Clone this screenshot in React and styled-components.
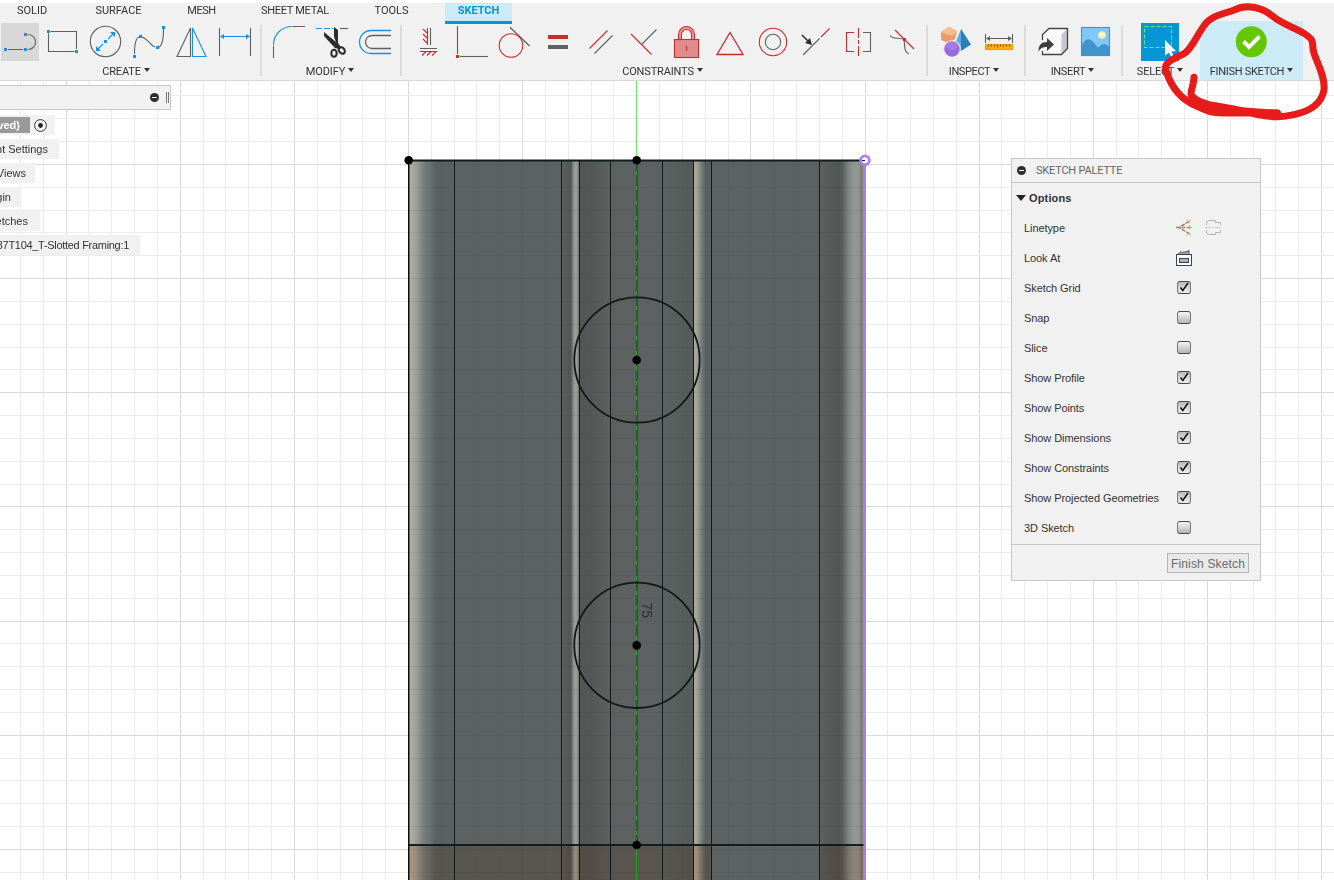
import React from "react";
import styled, { createGlobalStyle, css } from "styled-components";

const Global = createGlobalStyle`
  * { box-sizing: border-box; }
  body { margin: 0; background: #fff; overflow: hidden; }
`;

const ink = "#606060";
const red = "#cf2a2a";
const blue = "#1a8fe3";
const ui = `Roboto, "Liberation Sans", sans-serif`;
const body = `"Liberation Sans", Arial, sans-serif`;

const Page = styled.div`
  position: relative;
  display: flex;
  flex-direction: column;
  width: 1334px;
  height: 880px;
  overflow: hidden;
  color: #333;
  font: 11px ${body};
`;
const Header = styled.header`
  height: 81px;
  flex: none;
  border-top: 3px solid #fff;
  border-bottom: 1px solid #d8d8d8;
  background: #f1f1f1;
  font-family: ${ui};
`;
const Tabs = styled.nav`
  display: flex;
  height: 20px;
`;
const Tab = styled.div`
  width: ${(p) => p.$w}px;
  height: 21px;
  margin-left: ${(p) => p.$gap || 0}px;
  padding-top: 1px;
  line-height: 13px;
  text-align: center;
  letter-spacing: ${(p) => p.$ls || 0}px;
  ${(p) =>
    p.$active &&
    css`
      color: #0696d7;
      font-weight: 700;
      background: #cdeaf7;
      border-bottom: 3px solid #0696d7;
    `}
`;
const Toolbar = styled.div`
  display: flex;
  height: 57px;
  padding-left: 1px;
`;
const Group = styled.section`
  display: flex;
  flex-direction: column;
  align-items: center;
`;
const SelectGroup = styled(Group)`
  width: 38px;
`;
const FinishGroup = styled(Group)`
  width: 103px;
  height: 59px;
  margin: -2px 0 0 21px;
  padding-top: 2px;
  background: #cdeaf7;
`;
const IconRow = styled.div`
  display: flex;
  gap: 5px;
  height: 38px;
`;
const IconSvg = styled.svg`
  display: block;
  flex: none;
  fill: none;
  stroke: ${ink};
  stroke-width: 1.1;
  background: ${(p) => p.$bg || "none"};
`;
const Divider = styled.div`
  width: ${(p) => p.$w}px;
  flex: none;
  padding: 2px 0 4px 6px;
  &::before {
    content: "";
    display: block;
    width: 2px;
    height: 51px;
    background: #dcdcdc;
  }
`;
const Label = styled.div`
  display: flex;
  align-items: center;
  gap: 3px;
  height: 14px;
  margin: 3px 0 0 ${(p) => p.$shift || 0}px;
  white-space: nowrap;
  letter-spacing: ${(p) => p.$ls || 0}px;
  &::after {
    content: "";
    margin-top: -2px;
    border: 3px solid transparent;
    border-top: 4px solid #333;
    border-bottom: 0;
  }
`;
const Viewport = styled.main`
  position: relative;
  flex: 1;
`;
const Scene = styled.svg`
  position: absolute;
  inset: 0;
`;
const Browser = styled.aside`
  position: absolute;
  left: 0;
  top: 4px;
  display: flex;
  flex-direction: column;
  align-items: flex-start;
  gap: 4px;
`;
const BrowserBar = styled.div`
  display: flex;
  align-items: center;
  justify-content: flex-end;
  gap: 7px;
  width: 171px;
  height: 25px;
  margin-bottom: 1px;
  padding-right: 1px;
  border: 1px solid #c8c8c8;
  border-left: 0;
  background: #f1f1f1;
`;
const Minus = styled.i`
  display: flex;
  align-items: center;
  justify-content: center;
  width: 9px;
  height: 9px;
  border-radius: 50%;
  background: #2d2d2d;
  &::before {
    content: "";
    width: 5px;
    height: 1px;
    background: #fff;
  }
`;
const Grip = styled.i`
  width: 3px;
  height: 11px;
  border: solid #777;
  border-width: 0 1px;
`;
const Node = styled.div`
  display: flex;
  align-items: center;
  justify-content: flex-end;
  width: ${(p) => p.$w}px;
  height: 20px;
  padding-right: ${(p) => p.$pad ?? 11}px;
  letter-spacing: ${(p) => p.$ls || 0}px;
  overflow: hidden;
  white-space: nowrap;
  background: #f1f1f1;
`;
const RootName = styled.b`
  display: flex;
  align-items: center;
  justify-content: flex-end;
  width: 30px;
  height: 16px;
  padding-right: 10px;
  margin-right: 4px;
  color: #fff;
  background: #999;
`;
const Palette = styled.aside`
  position: absolute;
  left: 1011px;
  top: 77px;
  width: 250px;
  height: 423px;
  border: 1px solid #c8c8c8;
  background: #f1f1f1;
`;
const PaletteHead = styled.div`
  display: flex;
  align-items: center;
  gap: 10px;
  height: 24px;
  padding-left: 5px;
  border-bottom: 1px solid #c8c8c8;
  color: #666;
  font-family: ${ui};
  letter-spacing: -0.2px;
`;
const Section = styled.div`
  display: flex;
  align-items: center;
  gap: 4px;
  height: 30px;
  padding-left: 4px;
  font-weight: 700;
  letter-spacing: 0.15px;
  &::before {
    content: "";
    margin-right: -1px;
    border: 5px solid transparent;
    border-top: 6px solid #222;
    border-bottom: 0;
  }
`;
const Option = styled.div`
  display: flex;
  align-items: center;
  height: 30px;
  padding-left: 12px;
`;
const OptionName = styled.span`
  width: 153px;
  white-space: nowrap;
  letter-spacing: -0.08px;
`;
const Tools = styled.span`
  display: flex;
  gap: 12px;
  margin: -1px 0 0 -1px;
`;
const Check = styled.span`
  display: flex;
  width: 14px;
  height: 13px;
  margin-top: -1px;
  border: 1px solid #484848;
  border-color: #484848 #777;
  border-radius: 3px;
  background: linear-gradient(${(p) => (p.$on ? "#bababa, #eee" : "#f4f4f4, #b4b4b4")});
  svg { display: block; }
`;
const Footer = styled.div`
  display: flex;
  justify-content: flex-end;
  height: 37px;
  margin-top: 1px;
  padding: 8px 11px;
  border-top: 1px solid #c8c8c8;
`;
const FinishButton = styled.button`
  width: 82px;
  height: 20px;
  padding: 1px 0 0;
  border: 1px solid #b4b4b4;
  background: #e9e9e9;
  color: #6b6b6b;
  font: 12px ${body};
  letter-spacing: 0.15px;
  white-space: nowrap;
`;
const Markup = styled.svg`
  position: absolute;
  left: 0;
  top: 0;
  pointer-events: none;
`;
const Tint = styled.path`
  mix-blend-mode: multiply;
`;

/* Icon artwork shares one coordinate space; each icon is a 38px window on it. */
const Icon = ({ x, bg, children }) => (
  <IconSvg width="38" height="38" viewBox={`${x} 23 38 38`} $bg={bg}>
    {children}
  </IconSvg>
);
const Dots = ({ at, color = blue }) =>
  at.map(([x, y]) => (
    <rect key={`${x},${y}`} x={x - 1.5} y={y - 1.5} width="3" height="3" fill={color} stroke="none" />
  ));

const createIcons = (
  <IconRow>
    <Icon x={1} bg="#d8d8d8">
      <path d="M8 49.5H23M28 34.5C38 34.5 38 49.5 28 49.5" />
      <Dots at={[[5.5, 49.5], [25.5, 34.5], [25.5, 49.5]]} />
    </Icon>
    <Icon x={44}>
      <path d="M50.5 31.5H76.5V49M74.5 51.5H48.5V33.5" />
      <Dots at={[[48.5, 31.5], [76.5, 51.5]]} />
    </Icon>
    <Icon x={87}>
      <circle cx="105.5" cy="41.5" r="15.2" />
      <path d="M98 49L103 44M108 39L113 34" stroke={blue} />
      <path d="M96 51V46L101 51ZM115 32V37L110 32Z" fill={blue} stroke="none" />
      <Dots at={[[105.5, 41.5]]} />
    </Icon>
    <Icon x={130}>
      <path d="M134.5 54C134.5 46 136 38 139 37M142 37C148 39 151 46 155 47M159 47C163 45 163.5 36 163.5 29" />
      <Dots at={[[134.5, 56.5], [140.5, 36.5], [157.5, 47.5], [163.5, 27.5]]} />
    </Icon>
    <Icon x={173}>
      <path d="M190.5 28V56.5H177Z" />
      <path d="M192.5 28V56.5H206Z" stroke={blue} />
    </Icon>
    <Icon x={216}>
      <path d="M219.5 28V56M250.5 28V56" />
      <path d="M222 36.5H248" stroke={blue} />
      <path d="M220 36.5l4-2.5v5zM250 36.5l-4-2.5v5z" fill={blue} stroke="none" />
    </Icon>
  </IconRow>
);

const modifyIcons = (
  <IconRow>
    <Icon x={270}>
      <path d="M273.5 46V58M293 26.5H305" />
      <path d="M273.5 45C273.5 35 281 26.5 292 26.5" stroke={blue} />
    </Icon>
    <Icon x={313}>
      <path d="M316 28.5H333" stroke={blue} strokeDasharray="6 2" />
      <path d="M340 28.5H348" />
      <path d="M324 32L336 42L334 37V27L338 30V43L341 47L339 49L335 48L324 36Z" fill="#2d2d2d" stroke="none" />
      <ellipse cx="334" cy="53.3" rx="2.7" ry="3.5" stroke="#2d2d2d" strokeWidth="2.1" />
      <ellipse cx="341.8" cy="50.5" rx="2.7" ry="3.5" transform="rotate(-42 341.8 50.5)" stroke="#2d2d2d" strokeWidth="2.1" />
    </Icon>
    <Icon x={356}>
      <path d="M391 30.5H371A11.5 11.5 0 0 0 371 53.5H391" stroke={blue} strokeWidth="1.3" />
      <path d="M391 35.5H372A6.5 6.5 0 0 0 372 48.5H391" strokeWidth="1.3" />
    </Icon>
  </IconRow>
);

const constraintIcons = (
  <IconRow>
    <Icon x={409}>
      <path d="M430.5 28V45M420 48.5H437" />
      <path d="M427.5 28V45M420 51.5H437M423 29l4 4M423 34l4 4M423 39l4 4M422 55.5l4-4M427 55.5l4-4M432 55.5l4-4" stroke={red} />
    </Icon>
    <Icon x={452}>
      <path d="M460 56.5H488" />
      <path d="M457.5 26V54" stroke={red} />
      <Dots at={[[457.5, 56.5]]} color={red} />
    </Icon>
    <Icon x={495}>
      <path d="M510 27.3L529.5 46" strokeWidth="1.3" />
      <circle cx="511" cy="45.5" r="11.8" stroke={red} />
    </Icon>
    <Icon x={538}>
      <rect x="548" y="35" width="20" height="4" fill={red} stroke="none" />
      <rect x="548" y="45" width="20" height="4" fill={ink} stroke="none" />
    </Icon>
    <Icon x={581}>
      <path d="M594.5 53.5L612.5 35.5" />
      <path d="M589.5 48.5L607.5 30.5" stroke={red} />
    </Icon>
    <Icon x={624}>
      <path d="M642 44L656.5 29.5" />
      <path d="M631 34L651.5 54.5" stroke={red} />
    </Icon>
    <Icon x={667}>
      <path d="M680 39V34.5A6.5 6.5 0 0 1 693 34.5V39" stroke={red} strokeWidth="4" />
      <path d="M680 39V34.5A6.5 6.5 0 0 1 693 34.5V39" stroke="#e49a9a" strokeWidth="2" />
      <rect x="674.5" y="39.5" width="24" height="18" fill="#e08c8c" stroke={red} />
      <path d="M686.5 45.5V51" stroke={red} />
    </Icon>
    <Icon x={710}>
      <path d="M730 32.5L743 54.5H717Z" stroke={red} strokeWidth="1.3" />
    </Icon>
    <Icon x={753}>
      <circle cx="773" cy="42" r="13.7" stroke={red} />
      <circle cx="773" cy="42" r="7.7" />
    </Icon>
    <Icon x={796}>
      <path d="M803 55L819.5 38.5" />
      <path d="M821 37L829.5 28.5" stroke={red} />
      <path d="M802 35L808 41" stroke="#2d2d2d" strokeWidth="1.5" />
      <path d="M812 45L805 43L810 38Z" fill="#2d2d2d" stroke="none" />
    </Icon>
    <Icon x={839}>
      <path d="M863 32.5H870.5V51.5H863" />
      <path d="M854 32.5H846.5V51.5H854M858.5 28V38M858.5 40V44M858.5 46V56" stroke={red} />
    </Icon>
    <Icon x={882}>
      <path d="M890 35.5C893 40 899 37 904 39.5C905 46 904 53 909 53.5" />
      <path d="M895 30L914 49" stroke={red} />
      <Dots at={[[904.5, 39.5]]} color={red} />
    </Icon>
  </IconRow>
);

const inspectIcons = (
  <IconRow>
    <Icon x={937}>
      <path d="M949 27L957 31L955 39L948 43L941 40V32Z" fill="#eb9d67" stroke="none" />
      <path d="M949 27L957 31L952 36L941 32Z" fill="#f6bd91" stroke="none" />
      <path d="M961 29L954 46L961 51Z" fill="#5aaee0" stroke="none" />
      <path d="M961 29L971 44.5L961 51Z" fill="#2d7fb8" stroke="none" />
      <circle cx="952" cy="49" r="8.3" fill="#9a6bdc" stroke="#f1f1f1" />
      <ellipse cx="952" cy="46" rx="6" ry="4" fill="#a87ae6" stroke="none" />
    </Icon>
    <Icon x={980}>
      <path d="M985.5 34V43M1012.5 34V43M988 38.5H1010" />
      <path d="M986 38.5l4-2.5v5zM1012 38.5l-4-2.5v5z" fill={ink} stroke="none" />
      <rect x="985.5" y="44.5" width="27" height="5" fill="#ffab0a" stroke="#f29f08" />
      <path d="M988.5 44.5v2M991.5 44.5v2M994.5 44.5v2M997.5 44.5v3M1000.5 44.5v2M1003.5 44.5v2M1006.5 44.5v2M1009.5 44.5v2" stroke="#7a5200" />
    </Icon>
  </IconRow>
);

const insertIcons = (
  <IconRow>
    <Icon x={1034}>
      <path d="M1042.5 34.5L1049 28.5H1067.5L1061.5 34.5Z" fill="#fafafa" stroke="none" />
      <path d="M1042.5 34.5H1061.5V54.5H1042.5Z" fill="#f8f8fa" stroke="none" />
      <path d="M1061.5 34.5L1067.5 28.5V48.5L1061.5 54.5Z" fill="#c5c8cf" stroke="none" />
      <path d="M1042.5 40V34.5L1049 28.5H1067.5V48.5L1061.5 54.5H1042.5V51" stroke="#444" strokeWidth="1.3" />
      <path d="M1038.5 52C1038.5 45 1041 42 1047 42V38L1054 44.5L1047 51V47C1043 47 1040 48 1038.5 52Z" fill="#3c3f42" stroke="none" />
    </Icon>
    <Icon x={1077}>
      <rect x="1081.5" y="27.5" width="28" height="28" fill="#81c7f8" stroke="#3994cf" />
      <path d="M1082 45C1087 36 1091 38 1098 48C1102 43 1106 43 1109 47V55H1082Z" fill="#4093cc" stroke="none" />
      <circle cx="1102" cy="35" r="3.3" fill="#fff5c9" stroke="#f8e8a7" />
    </Icon>
  </IconRow>
);

const PaletteIcons = {
  center: (
    <svg width="17" height="17" viewBox="0 0 17 17" fill="none">
      <path d="M13 2.5L3 8.5L13 14.5" stroke="#777" strokeWidth="1.3" strokeDasharray="4 1" />
      <path d="M0 8.5H16" stroke="#e87817" strokeWidth="1.4" strokeDasharray="4 1.5" />
      <path d="M10.5 1l3.5 2.5M14.5 .5l-2.5 3.5M10.5 16l3.5-2.5M14.5 16.5l-2.5-3.5M13.5 6.5v4" stroke="#ee9a5a" />
    </svg>
  ),
  construction: (
    <svg width="17" height="17" viewBox="0 0 17 17" fill="none">
      <path d="M1.5 6V3L3.5 1.5H10.5V3.5H15.5V6M1.5 11V14L3.5 15.5H10.5V13.5H15.5V11" stroke="#b2b2b2" />
      <path d="M0 8.5H17" stroke="#ecc2a4" strokeDasharray="5 1.5 2 1.5" />
    </svg>
  ),
  look: (
    <svg width="16" height="16" viewBox="0 0 16 16" fill="none" stroke="#3b4350">
      <path d="M1.5 4.5L5 1.5L6 2.5L11 1.5L13 .5V4.5" fill="#9aa3b0" strokeWidth=".8" />
      <rect x=".5" y="4.5" width="15" height="11" fill="#fff" />
      <rect x="3.5" y="8.5" width="9" height="4" fill="#a8b0bd" />
    </svg>
  ),
};

const options = [
  ["Sketch Grid", true],
  ["Snap", false],
  ["Slice", false],
  ["Show Profile", true],
  ["Show Points", true],
  ["Show Dimensions", true],
  ["Show Constraints", true],
  ["Show Projected Geometries", true],
  ["3D Sketch", false],
];

const profileStops = [
  [409, "#b0b0a2"], [414, "#a5a69a"], [418, "#969891"], [422, "#7f8482"], [427, "#6d7577"], [431, "#677072"], [435, "#5c6263"],
  [441, "#596060"], [454, "#5c6261"], [561, "#5c6261"], [567, "#565b5a"], [571, "#535756"], [573, "#7f8582"],
  [575, "#9aa09c"], [577, "#979c98"], [578, "#80847b"], [579, "#70736d"], [580, "#525756"], [592, "#545957"],
  [610, "#5c6160"], [662, "#5c6261"], [680, "#585e5c"], [693, "#555b59"], [694, "#aaa999"], [697, "#a3a395"],
  [700, "#858984"], [703, "#6a7071"], [706, "#5a5f5e"], [711, "#5c6261"], [819, "#5c6261"], [830, "#555a58"],
  [839, "#525655"], [843, "#5c6260"], [849, "#808887"], [854, "#909896"], [859, "#8f948f"], [862, "#77776c"], [864, "#aaa291"],
];

const edges = [454, 561, 579, 610, 662, 693, 711, 819];
const gridX = (i) => Math.floor(408.5 + i * 22.825);
const gridY = (i) => Math.floor(164.4 + i * 22.833);

function Drawing() {
  const grid = [];
  for (let i = -18; i < 42; i++) {
    grid.push(<rect key={`v${i}`} x={gridX(i)} y="81" width="1" height="799" fill={i % 5 ? "#ececec" : "#d9d9d9"} />);
  }
  for (let i = -3; i < 32; i++) {
    grid.push(<rect key={`h${i}`} x="0" y={gridY(i)} width="1334" height="1" fill={i % 5 ? "#ececec" : "#d9d9d9"} />);
  }
  const faint = [];
  for (let i = 0; i < 20; i++) {
    faint.push(<rect key={`v${i}`} x={gridX(i)} y="161" width="1" height="719" />);
  }
  for (let i = 0; i < 32; i++) {
    faint.push(<rect key={`h${i}`} x="409" y={gridY(i)} width="455" height="1" />);
  }
  return (
    <Scene width="1334" height="799" viewBox="0 81 1334 799">
      <defs>
        <linearGradient id="metal" gradientUnits="userSpaceOnUse" x1="409" x2="864" y1="0" y2="0">
          {profileStops.map(([x, c]) => (
            <stop key={x} offset={(x - 409) / 455} stopColor={c} />
          ))}
        </linearGradient>
      </defs>
      {grid}
      <rect x="408" y="160" width="457" height="720" fill="url(#metal)" />
      <Tint d="M409 846H711V880H409ZM820 846H864V880H820Z" fill="#f7dfcf" />
      <g fill="#333" opacity=".06">{faint}</g>
      {edges.map((x) => (
        <rect key={x} x={x} y="161" width="1" height="719" fill="#10191c" />
      ))}
      <rect x="408" y="160" width="1.5" height="720" fill="#0b0e0f" />
      <rect x="409" y="159.5" width="455" height="2" fill="#111c1f" />
      <rect x="409" y="844" width="455" height="2" fill="#141c20" />
      <rect x="636" y="81" width="1" height="79" fill="#6ee26e" />
      <rect x="636" y="161" width="2" height="684" fill="#235a2e" />
      <path d="M636.5 171V845" stroke="#2fa437" strokeWidth="1.2" strokeDasharray="4 11" />
      <rect x="636" y="846" width="1" height="34" fill="#22a022" />
      <rect x="863.5" y="161" width="2.5" height="719" fill="#a683dc" />
      <g fill="none" stroke="#12191b" strokeWidth="1.8">
        <circle cx="637" cy="360" r="62.7" />
        <circle cx="637" cy="645.3" r="62.7" />
      </g>
      {[[408.7, 160.2], [636.7, 160.2], [636.7, 360], [636.7, 645.4], [636.7, 845]].map(([x, y]) => (
        <circle key={`${x},${y}`} cx={x} cy={y} r="4.3" fill="#000" />
      ))}
      <circle cx="865" cy="160.3" r="4.4" fill="#fff" stroke="#ad80ed" strokeWidth="2.8" />
      <rect x="862" y="160" width="3" height="1" fill="#222" />
      <text transform="translate(641.5 602.5) rotate(90)" fontFamily={body} fontSize="14" fill="#2a3030">
        75
      </text>
    </Scene>
  );
}

export default function App() {
  return (
    <Page>
      <Global />
      <Header>
        <Tabs>
          <Tab $w={64}>SOLID</Tab>
          <Tab $w={109}>SURFACE</Tab>
          <Tab $w={57} $ls={-0.4}>MESH</Tab>
          <Tab $w={130} $ls={-0.3}>SHEET METAL</Tab>
          <Tab $w={63}>TOOLS</Tab>
          <Tab $w={67} $gap={22} $active>SKETCH</Tab>
        </Tabs>
        <Toolbar>
          <Group>
            {createIcons}
            <Label $shift={-3} $ls={-0.15}>CREATE</Label>
          </Group>
          <Divider $w={16} />
          <Group>
            {modifyIcons}
            <Label $shift={-4} $ls={-0.1}>MODIFY</Label>
          </Group>
          <Divider $w={15} />
          <Group>
            {constraintIcons}
            <Label $shift={-4} $ls={-0.15}>CONSTRAINTS</Label>
          </Group>
          <Divider $w={17} />
          <Group>
            {inspectIcons}
            <Label $shift={-7} $ls={-0.4}>INSPECT</Label>
          </Group>
          <Divider $w={16} />
          <Group>
            {insertIcons}
            <Label $shift={-4} $ls={-0.3}>INSERT</Label>
          </Group>
          <Divider $w={26} />
          <SelectGroup>
            <IconRow>
              <Icon x={1141} bg="#0696d7">
                <rect x="1144.5" y="26.5" width="27" height="21" stroke="#72df83" strokeDasharray="4 2" />
                <path d="M1165 40L1176 51L1171.5 51.5L1174 57L1171.5 58L1169 52.5L1165 55.5Z" fill="#fff" stroke="none" />
              </Icon>
            </IconRow>
            <Label $ls={-0.2}>SELECT</Label>
          </SelectGroup>
          <FinishGroup>
            <IconRow>
              <Icon x={1232}>
                <circle cx="1250.3" cy="41.7" r="15.5" fill="#64c800" stroke="none" />
                <path d="M1242.5 41.5L1248 47L1258.5 36.5" stroke="#fff" strokeWidth="4" />
              </Icon>
            </IconRow>
            <Label $ls={-0.3}>FINISH SKETCH</Label>
          </FinishGroup>
        </Toolbar>
      </Header>
      <Viewport>
        <Drawing />
        <Browser>
          <BrowserBar>
            <Minus />
            <Grip />
          </BrowserBar>
          <Node $w={55} $pad={8}>
            <RootName>ved)</RootName>
            <svg width="13" height="13" viewBox="0 0 13 13">
              <circle cx="6.5" cy="6.5" r="5.9" fill="#fff" stroke="#333" />
              <circle cx="6.5" cy="6.5" r="2.4" fill="#222" />
            </svg>
          </Node>
          <Node $w={59}>nt Settings</Node>
          <Node $w={35} $pad={9}>Views</Node>
          <Node $w={21} $pad={10}>gin</Node>
          <Node $w={40} $pad={12}>etches</Node>
          <Node $w={140} $ls={-0.3}>37T104_T-Slotted Framing:1</Node>
        </Browser>
        <Palette>
          <PaletteHead>
            <Minus />
            SKETCH PALETTE
          </PaletteHead>
          <Section>Options</Section>
          <Option>
            <OptionName>Linetype</OptionName>
            <Tools>
              {PaletteIcons.center}
              {PaletteIcons.construction}
            </Tools>
          </Option>
          <Option>
            <OptionName>Look At</OptionName>
            <Tools>{PaletteIcons.look}</Tools>
          </Option>
          {options.map(([name, on]) => (
            <Option key={name}>
              <OptionName>{name}</OptionName>
              <Check $on={on}>
                {on && (
                  <svg width="12" height="11" viewBox="0 0 12 11" fill="none" stroke="#111">
                    <path d="M2.5 5.5L4.8 8.5L10 1" strokeWidth="1.5" />
                  </svg>
                )}
              </Check>
            </Option>
          ))}
          <Footer>
            <FinishButton>Finish Sketch</FinishButton>
          </Footer>
        </Palette>
      </Viewport>
      <Markup width="1334" height="130" fill="none" stroke="#e81b1b" strokeLinecap="round" strokeLinejoin="round">
        <g transform="translate(930 0) scale(.33333)" strokeWidth="21">
          <path d="M792 232C792 255 777 282 786 289C805 307 830 314 860 318C900 324 940 332 980 343C1030 354 1060 351 1095 343C1140 333 1175 310 1182 270C1186 230 1162 190 1152 160C1142 125 1158 125 1125 102C1100 85 1055 72 1030 50C1000 24 950 10 915 29C880 42 845 47 826 72C800 105 795 130 768 157C740 175 695 185 709 215C725 265 755 300 800 318C830 332 840 338 880 339L1042 339" />
          <path d="M860 327L1042 340" />
        </g>
      </Markup>
    </Page>
  );
}
